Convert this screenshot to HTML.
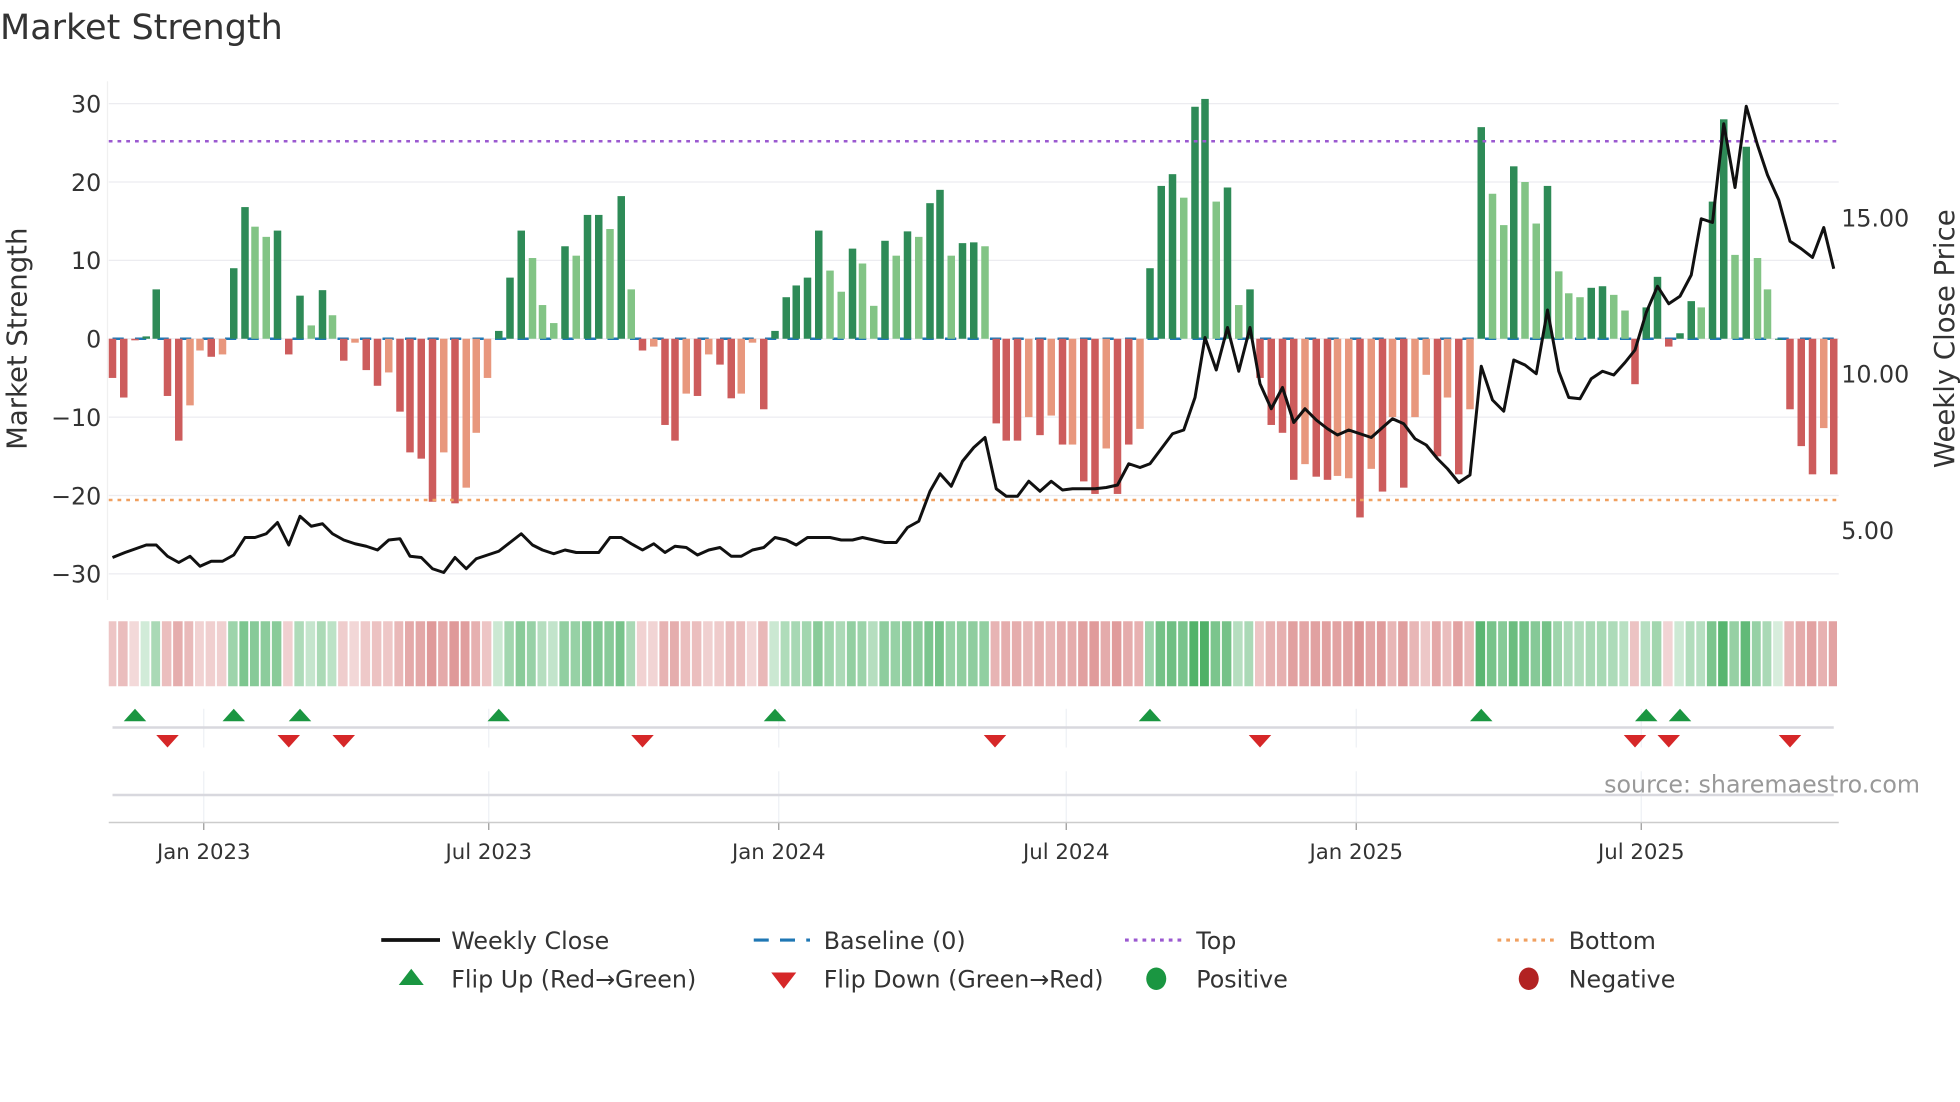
<!DOCTYPE html>
<html><head><meta charset="utf-8"><style>
html,body{margin:0;padding:0;background:#fff;width:1960px;height:1102px;overflow:hidden}
svg text{font-family:"DejaVu Sans","Liberation Sans",sans-serif}
</style></head><body>
<svg id="s" width="1960" height="1102" viewBox="0 0 1568 881.6" xmlns="http://www.w3.org/2000/svg"></svg>
<script>
const B=[[90,-5,0],[99,-7.5,0],[108,-0.2,0],[117,0.3,0],[125,6.3,0],[134,-7.3,0],[143,-13,0],[152,-8.5,1],[160,-1.5,1],[169,-2.3,0],[178,-2,1],[187,9,0],[196,16.8,0],[204,14.3,1],[213,13,1],[222,13.8,0],[231,-2,0],[240,5.5,0],[249,1.7,1],[258,6.2,0],[266,3,1],[275,-2.8,0],[284,-0.5,1],[293,-4,0],[302,-6,0],[311,-4.3,1],[320,-9.3,0],[328,-14.5,0],[337,-15.3,0],[346,-20.8,0],[355,-14.5,1],[364,-21,0],[373,-19,1],[381,-12,1],[390,-5,1],[399,1,0],[408,7.8,0],[417,13.8,0],[426,10.3,1],[434,4.3,1],[443,2,1],[452,11.8,0],[461,10.6,1],[470,15.8,0],[479,15.8,0],[488,14,1],[497,18.2,0],[505,6.3,1],[514,-1.5,0],[523,-1,1],[532,-11,0],[540,-13,0],[549,-7,1],[558,-7.3,0],[567,-2,1],[576,-3.3,0],[585,-7.6,0],[593,-7,1],[602,-0.5,1],[611,-9,0],[620,1,0],[629,5.3,0],[637,6.8,0],[646,7.8,0],[655,13.8,0],[664,8.7,1],[673,6,1],[682,11.5,0],[690,9.6,1],[699,4.2,1],[708,12.5,0],[717,10.6,1],[726,13.7,0],[735,13,1],[744,17.3,0],[752,19,0],[761,10.6,1],[770,12.2,0],[779,12.3,0],[788,11.8,1],[797,-10.8,0],[805,-13,0],[814,-13,0],[823,-10,1],[832,-12.3,0],[841,-9.8,1],[850,-13.5,0],[858,-13.5,1],[867,-18.2,0],[876,-19.8,0],[885,-14,1],[894,-19.8,0],[903,-13.5,0],[912,-11.5,1],[920,9,0],[929,19.5,0],[938,21,0],[947,18,1],[956,29.6,0],[964,30.6,0],[973,17.5,1],[982,19.3,0],[991,4.3,1],[1000,6.3,0],[1008,-5,0],[1017,-11,0],[1026,-12,0],[1035,-18,0],[1044,-16,1],[1053,-17.6,0],[1062,-18,0],[1070,-17.5,1],[1079,-17.8,1],[1088,-22.8,0],[1097,-16.6,1],[1106,-19.5,0],[1114,-10,1],[1123,-19,0],[1132,-10,1],[1141,-4.6,1],[1150,-15,0],[1158,-7.5,1],[1167,-17.3,0],[1176,-9,1],[1185,27,0],[1194,18.5,1],[1203,14.5,1],[1211,22,0],[1220,20,1],[1229,14.7,1],[1238,19.5,0],[1247,8.6,1],[1255,5.8,1],[1264,5.3,1],[1273,6.5,0],[1282,6.7,0],[1291,5.6,1],[1300,3.6,1],[1308,-5.8,0],[1317,4,0],[1326,7.9,0],[1335,-1,0],[1344,0.7,0],[1353,4.8,0],[1361,4,1],[1370,17.5,0],[1379,28,0],[1388,10.7,1],[1397,24.5,0],[1406,10.3,1],[1414,6.3,1],[1423,0,0],[1432,-9,0],[1441,-13.7,0],[1450,-17.3,0],[1459,-11.4,1],[1467,-17.3,0]];
const P=[[90,446],[100,442],[117,436],[125,436],[134,445],[143,450],[152,445],[160,453],[169,449],[178,449],[187,444],[196,430],[204,430],[213,427],[222,418],[231,436],[240,413],[249,421],[258,419],[266,427],[275,432],[284,435],[293,437],[302,440],[311,432],[320,431],[328,445],[337,446],[346,455],[355,458],[364,446],[373,455],[381,447],[390,444],[399,441],[408,434],[417,427],[426,436],[434,440],[443,443],[452,440],[461,442],[470,442],[479,442],[488,430],[497,430],[505,435],[514,440],[523,435],[532,442],[540,437],[549,438],[558,444],[567,440],[576,438],[585,445],[593,445],[602,440],[611,438],[620,430],[629,432],[637,436],[646,430],[655,430],[664,430],[673,432],[682,432],[690,430],[699,432],[708,434],[717,434],[726,422],[735,417],[744,393],[752,379],[761,389],[770,369],[779,358],[788,350],[797,391],[805,397],[814,397],[823,385],[832,393],[841,385],[850,392],[858,391],[867,391],[876,391],[885,390],[894,388],[903,371],[912,374],[920,371],[929,359],[938,347],[947,344],[956,318],[964,270],[973,296],[982,262],[991,297],[1000,262],[1008,307],[1017,327],[1026,310],[1035,338],[1044,327],[1053,336],[1062,343],[1070,348],[1079,344],[1088,347],[1097,350],[1106,342],[1114,335],[1123,339],[1132,351],[1141,356],[1150,367],[1158,375],[1167,386],[1176,380],[1185,293],[1194,320],[1203,329],[1211,288],[1220,292],[1229,299],[1238,248],[1247,297],[1255,318],[1264,319],[1273,303],[1282,297],[1291,300],[1300,290],[1308,280],[1317,250],[1326,229],[1335,243],[1344,237],[1353,220],[1361,175],[1370,178],[1379,99],[1388,150],[1397,85],[1406,116],[1414,140],[1423,160],[1432,193],[1441,199],[1450,206],[1459,182],[1467,215]];
let h='';
const Y=v=>271-v*6.27;
// grid
[30,20,10,0,-10,-20,-30].forEach(v=>{h+=`<line x1="87" x2="1471" y1="${Y(v)}" y2="${Y(v)}" stroke="#ececf0" stroke-width="1"/>`;
h+=`<text x="81" y="${Y(v)+7}" font-size="19" fill="#333" text-anchor="end">${v<0?'\u2212'+(-v):v}</text>`});
h+=`<line x1="86" x2="86" y1="65" y2="480" stroke="#f0f0f0"/>`;
['15.00','10.00','5.00'].forEach((t,i)=>h+=`<text x="1473" y="${174+i*125+7}" font-size="19" fill="#333">${t}</text>`);
// baseline
h+=`<line x1="90" x2="1467" y1="271" y2="271" stroke="#1f77b4" stroke-width="2" stroke-dasharray="9,9"/>`;
B.forEach(([x,v,l])=>{const c=v>=0?(l?'#82c485':'#2e8b57'):(l?'#e8977d':'#cd5c5c');
const y1=Math.min(Y(v),271),hh=Math.max(Math.abs(v)*6.27,0.8);h+=`<rect x="${x-3}" y="${y1}" width="6" height="${hh}" fill="${c}"/>`;});
h+=`<line x1="87" x2="1471" y1="113" y2="113" stroke="#9b59d0" stroke-width="2" stroke-dasharray="3,4"/>`;
h+=`<line x1="87" x2="1471" y1="400" y2="400" stroke="#f0a060" stroke-width="2" stroke-dasharray="3,4"/>`;
h+=`<polyline fill="none" stroke="#111" stroke-width="2.4" stroke-linejoin="round" points="${P.map(p=>p.join(',')).join(' ')}"/>`;
// strip
B.forEach(([x,v],i)=>{const nx=i<B.length-1?B[i+1][0]:x+8.85;const px=i>0?B[i-1][0]:x-8.85;
const l=(x+px)/2,r=(x+nx)/2;let c;const t=Math.min(Math.abs(v)/31,1);
if(v>=0){const a=0.22+0.75*Math.pow(t,0.7);c=`rgba(40,160,70,${a*0.85})`}else{const a=0.25+0.6*Math.pow(t,0.8);c=`rgba(200,80,80,${a*0.85})`}
h+=`<rect x="${Math.max(l,87)}" y="497" width="${Math.min(r,1471)-Math.max(l,87)-1.4}" height="52" fill="${c}"/>`;});
// ticks/grid
const T=[[163,'Jan 2023'],[391,'Jul 2023'],[623,'Jan 2024'],[853,'Jul 2024'],[1085,'Jan 2025'],[1313,'Jul 2025']];
T.forEach(([x,t])=>{h+=`<line x1="${x}" x2="${x}" y1="567" y2="598" stroke="#eef0f5"/><line x1="${x}" x2="${x}" y1="617" y2="658" stroke="#eef0f5"/><line x1="${x}" x2="${x}" y1="658" y2="664" stroke="#999"/>`;
h+=`<text x="${x}" y="687" font-size="17" fill="#333" text-anchor="middle">${t}</text>`});
h+=`<line x1="90" x2="1467" y1="582" y2="582" stroke="#d8d8de" stroke-width="2"/>`;
h+=`<line x1="90" x2="1467" y1="636" y2="636" stroke="#d8d8de" stroke-width="2"/>`;
h+=`<line x1="87" x2="1471" y1="658" y2="658" stroke="#ccc" stroke-width="1.2"/>`;
[108,187,240,399,620,920,1185,1317,1344].forEach(x=>h+=`<polygon points="${x-9},577 ${x+9},577 ${x},567" fill="#1a9641"/>`);
[134,231,275,514,796,1008,1308,1335,1432].forEach(x=>h+=`<polygon points="${x-9},588 ${x+9},588 ${x},598" fill="#d62728"/>`);
h+=`<text x="1536" y="634" font-size="19" fill="#999" text-anchor="end">source: sharemaestro.com</text>`;
h+=`<text x="0" y="31" font-size="28" fill="#333">Market Strength</text>`;
h+=`<text transform="translate(21,271) rotate(-90)" font-size="22" fill="#333" text-anchor="middle">Market Strength</text>`;
h+=`<text transform="translate(1563,271) rotate(-90)" font-size="22" fill="#333" text-anchor="middle">Weekly Close Price</text>`;
// legend
const L=(x,y,t)=>`<text x="${x}" y="${y+7}" font-size="19" fill="#333">${t}</text>`;
h+=`<line x1="305" x2="352" y1="752" y2="752" stroke="#111" stroke-width="3"/>`+L(361,752,'Weekly Close');
h+=`<line x1="603" x2="648" y1="752" y2="752" stroke="#1f77b4" stroke-width="2.5" stroke-dasharray="12,9"/>`+L(659,752,'Baseline (0)');
h+=`<line x1="900" x2="945" y1="752" y2="752" stroke="#9b59d0" stroke-width="2.5" stroke-dasharray="3,4"/>`+L(957,752,'Top');
h+=`<line x1="1198" x2="1243" y1="752" y2="752" stroke="#f0a060" stroke-width="2.5" stroke-dasharray="3,4"/>`+L(1255,752,'Bottom');
h+=`<polygon points="319,788 339,788 329,775" fill="#1a9641"/>`+L(361,783,'Flip Up (Red\u2192Green)');
h+=`<polygon points="617,778 637,778 627,791" fill="#d62728"/>`+L(659,783,'Flip Down (Green\u2192Red)');
h+=`<ellipse cx="925" cy="783" rx="8" ry="9" fill="#1a9641"/>`+L(957,783,'Positive');
h+=`<ellipse cx="1223" cy="783" rx="8" ry="9" fill="#b22222"/>`+L(1255,783,'Negative');
document.getElementById('s').innerHTML=h;
</script>
</body></html>
